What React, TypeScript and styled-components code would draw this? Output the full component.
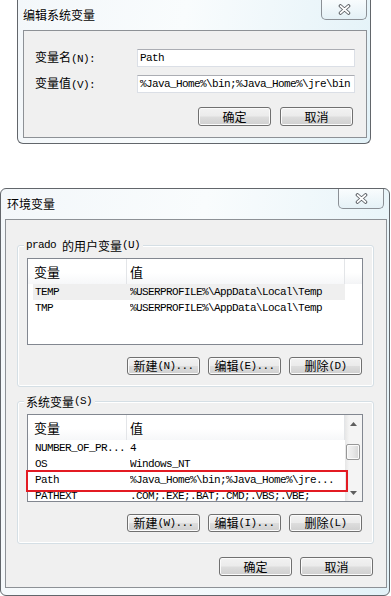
import React from "react";
import styled, { createGlobalStyle } from "styled-components";

const GlobalStyle = createGlobalStyle`
  html, body {
    margin: 0;
    padding: 0;
    background: #fff;
  }
  body {
    font-family: "Noto Sans CJK SC", "Noto Sans", sans-serif;
    font-size: 12px;
    color: #000;
  }
`;

const Page = styled.div`
  width: 391px;
  height: 596px;
  overflow: hidden;
  display: flex;
  flex-direction: column;
`;

const Window = styled.div`
  box-sizing: border-box;
  flex-shrink: 0;
  display: flex;
  flex-direction: column;
  border: 1px solid #62666b;
  background: linear-gradient(100deg, #f3f7fa 0%, #f9fcfd 45%, #e3f2f8 100%);
`;

const EditWindow = styled(Window)`
  margin-left: 17px;
  width: 354px;
  height: 144px;
  border-top: none;
  border-radius: 0 0 6px 6px;
  padding: 0 3px 5px 5px;
`;

const EnvWindow = styled(Window)`
  margin-top: 44px;
  width: 390px;
  height: 408px;
  border-radius: 6px;
  padding: 0 2px 7px 4px;
`;

const TitleBar = styled.div`
  height: 30px;
  flex-shrink: 0;
  display: flex;
  justify-content: space-between;
  align-items: flex-start;
`;

const Title = styled.div<{ $indent?: number }>`
  margin-left: ${(p) => p.$indent ?? 0}px;
  padding-top: 6px;
  line-height: 18px;
  font-size: 12px;
  text-shadow: 0 0 4px #fff, 0 0 2px #fff;
`;

const CloseButton = styled.div<{ $right?: number }>`
  box-sizing: border-box;
  width: 46px;
  height: 20px;
  margin-right: ${(p) => p.$right ?? 0}px;
  border: 1px solid #8b9096;
  border-top: none;
  border-radius: 0 0 5px 5px;
  background: linear-gradient(rgba(255, 255, 255, 0.7), rgba(225, 238, 244, 0.6));
  display: flex;
  align-items: center;
  justify-content: center;
`;

const Panel = styled.div`
  flex: 1;
  box-sizing: border-box;
  background: #f0f0f0;
  border: 1px solid #8d9196;
  display: flex;
  flex-direction: column;
`;

const Ascii = styled.span`
  font-family: "Liberation Mono", monospace;
  font-size: 11px;
  letter-spacing: -0.6px;
`;

const Form = styled.div`
  display: grid;
  grid-template-columns: 102px 218px;
  grid-auto-rows: 18px;
  row-gap: 8px;
  padding: 18px 0 0 11px;
`;

const Label = styled.div`
  align-self: center;
  line-height: 16px;
`;

const TextField = styled.div`
  box-sizing: border-box;
  height: 18px;
  background: #fff;
  border: 1px solid #dbdfe6;
  border-top-color: #abadb3;
  padding-left: 2px;
  display: flex;
  align-items: center;
  white-space: nowrap;
  overflow: hidden;
  font-family: "Liberation Mono", monospace;
  font-size: 11px;
  letter-spacing: -0.6px;
`;

const ButtonRow = styled.div<{ $top: number; $right: number; $gap: number }>`
  display: flex;
  justify-content: flex-end;
  gap: ${(p) => p.$gap}px;
  margin-top: ${(p) => p.$top}px;
  padding-right: ${(p) => p.$right}px;
`;

const Button = styled.div<{ $h: number }>`
  box-sizing: border-box;
  width: 73px;
  height: ${(p) => p.$h}px;
  border: 1px solid #707070;
  border-radius: 3px;
  background: linear-gradient(#f2f2f2 0%, #ebebeb 48%, #dddddd 52%, #cfcfcf 100%);
  box-shadow: inset 0 0 0 1px #fbfbfb;
  display: flex;
  align-items: center;
  justify-content: center;
  line-height: 14px;
  white-space: nowrap;
`;

const GroupBox = styled.div<{ $top: number }>`
  margin: ${(p) => p.$top}px 12px 0 11px;
  border: 1px solid #d5dfe5;
  border-radius: 3px;
  box-shadow: inset 0 0 0 1px #fff;
  padding-bottom: 11px;
  display: flex;
  flex-direction: column;
`;

const Legend = styled.div`
  align-self: flex-start;
  height: 14px;
  margin: -8px 0 0 6px;
  padding: 0 3px 0 2px;
  display: flex;
  align-items: center;
  background: #f0f0f0;
  white-space: nowrap;
`;

const ListWrap = styled.div`
  position: relative;
  margin: 6px 10px 0 9px;
`;

const ListBox = styled.div<{ $h: number }>`
  box-sizing: border-box;
  height: ${(p) => p.$h}px;
  border: 1px solid #828790;
  background: #fff;
  overflow: hidden;
  display: flex;
`;

const ListMain = styled.div`
  width: 317px;
  flex-shrink: 0;
  display: flex;
  flex-direction: column;
`;

const Header = styled.div`
  display: grid;
  grid-template-columns: 99px 218px;
  height: 25px;
  flex-shrink: 0;
`;

const HeaderCell = styled.div<{ $pad: number }>`
  box-sizing: border-box;
  padding-left: ${(p) => p.$pad}px;
  border-right: 1px solid #e3e5e8;
  background: linear-gradient(#fff 0%, #fff 55%, #f6f7f9 100%);
  display: flex;
  align-items: center;
  font-size: 13px;
`;

const HeaderFiller = styled.div`
  height: 25px;
  background: linear-gradient(#fff 0%, #fff 55%, #f3f4f6 100%);
`;

const Side = styled.div`
  flex: 1;
`;

const Rows = styled.div`
  padding-left: 5px;
`;

const Row = styled.div<{ $hot?: boolean }>`
  display: grid;
  grid-template-columns: 97px 1fr;
  height: 16px;
  align-items: center;
  background: ${(p) => (p.$hot ? "#efefef" : "transparent")};
  font-family: "Liberation Mono", monospace;
  font-size: 11px;
  letter-spacing: -0.6px;
  white-space: nowrap;
`;

const Cell = styled.div<{ $pad: number }>`
  padding-left: ${(p) => p.$pad}px;
  overflow: hidden;
`;

const Scrollbar = styled.div`
  flex: 1;
  display: flex;
  flex-direction: column;
  background: linear-gradient(90deg, #e6e6e6 0%, #f4f4f4 25%, #f4f4f4 100%);
`;

const ScrollArrow = styled.div`
  height: 17px;
  flex-shrink: 0;
  display: flex;
  align-items: center;
  justify-content: center;
`;

const ScrollTrack = styled.div`
  flex: 1;
  padding-top: 12px;
`;

const Thumb = styled.div`
  box-sizing: border-box;
  margin-left: 1px;
  width: 14px;
  height: 16px;
  border: 1px solid #979797;
  border-radius: 2px;
  background: linear-gradient(90deg, #f3f3f3 0%, #e8e8e8 50%, #d6d6d6 100%);
  box-shadow: inset 0 0 0 1px #fafafa;
`;

const Marker = styled.div`
  position: absolute;
  left: -1px;
  top: 56px;
  width: 322px;
  height: 22px;
  box-sizing: border-box;
  border: 2px solid #e31b23;
  pointer-events: none;
`;

const CloseIcon = () => (
  <svg width="13" height="11" viewBox="0 0 13 11">
    <path d="M2.5 2 L10.5 9 M10.5 2 L2.5 9" stroke="#5b5f64" strokeWidth="3.6" strokeLinecap="round" />
    <path d="M2.5 2 L10.5 9 M10.5 2 L2.5 9" stroke="#fff" strokeWidth="1.7" strokeLinecap="round" />
  </svg>
);

const Arrow = ({ up }: { up?: boolean }) => (
  <svg width="7" height="4" viewBox="0 0 7 4">
    <path d={up ? "M0 4 L3.5 0 L7 4Z" : "M0 0 L3.5 4 L7 0Z"} fill="#5e5e5e" />
  </svg>
);

type Variable = { name: string; value: string; hot?: boolean };

const userVars: Variable[] = [
  { name: "TEMP", value: "%USERPROFILE%\\AppData\\Local\\Temp", hot: true },
  { name: "TMP", value: "%USERPROFILE%\\AppData\\Local\\Temp" },
];

const systemVars: Variable[] = [
  { name: "NUMBER_OF_PR...", value: "4" },
  { name: "OS", value: "Windows_NT" },
  { name: "Path", value: "%Java_Home%\\bin;%Java_Home%\\jre..." },
  { name: "PATHEXT", value: ".COM;.EXE;.BAT;.CMD;.VBS;.VBE;" },
];

const VarList = ({ items }: { items: Variable[] }) => (
  <ListMain>
    <Header>
      <HeaderCell $pad={6}>变量</HeaderCell>
      <HeaderCell $pad={3}>值</HeaderCell>
    </Header>
    <Rows>
      {items.map((v) => (
        <Row key={v.name} $hot={v.hot}>
          <Cell $pad={2}>{v.name}</Cell>
          <Cell $pad={0}>{v.value}</Cell>
        </Row>
      ))}
    </Rows>
  </ListMain>
);

export default function App() {
  return (
    <Page>
      <GlobalStyle />

      <EditWindow>
        <TitleBar>
          <Title>编辑系统变量</Title>
          <CloseButton>
            <CloseIcon />
          </CloseButton>
        </TitleBar>
        <Panel>
          <Form>
            <Label>
              变量名<Ascii>(N):</Ascii>
            </Label>
            <TextField>Path</TextField>
            <Label>
              变量值<Ascii>(V):</Ascii>
            </Label>
            <TextField>%Java_Home%\bin;%Java_Home%\jre\bin</TextField>
          </Form>
          <ButtonRow $top={14} $right={13} $gap={9}>
            <Button $h={19}>确定</Button>
            <Button $h={19}>取消</Button>
          </ButtonRow>
        </Panel>
      </EditWindow>

      <EnvWindow>
        <TitleBar>
          <Title $indent={2}>环境变量</Title>
          <CloseButton $right={3}>
            <CloseIcon />
          </CloseButton>
        </TitleBar>
        <Panel>
          <GroupBox $top={25}>
            <Legend>
              <Ascii>prado&nbsp;</Ascii>的用户变量<Ascii>(U)</Ascii>
            </Legend>
            <ListWrap>
              <ListBox $h={87}>
                <VarList items={userVars} />
                <Side>
                  <HeaderFiller />
                </Side>
              </ListBox>
            </ListWrap>
            <ButtonRow $top={12} $right={11} $gap={8}>
              <Button $h={18}>
                新建<Ascii>(N)...</Ascii>
              </Button>
              <Button $h={18}>
                编辑<Ascii>(E)...</Ascii>
              </Button>
              <Button $h={18}>
                删除<Ascii>(D)</Ascii>
              </Button>
            </ButtonRow>
          </GroupBox>

          <GroupBox $top={14}>
            <Legend>
              系统变量<Ascii>(S)</Ascii>
            </Legend>
            <ListWrap>
              <ListBox $h={88}>
                <VarList items={systemVars} />
                <Scrollbar>
                  <ScrollArrow>
                    <Arrow up />
                  </ScrollArrow>
                  <ScrollTrack>
                    <Thumb />
                  </ScrollTrack>
                  <ScrollArrow>
                    <Arrow />
                  </ScrollArrow>
                </Scrollbar>
              </ListBox>
              <Marker />
            </ListWrap>
            <ButtonRow $top={12} $right={11} $gap={8}>
              <Button $h={18}>
                新建<Ascii>(W)...</Ascii>
              </Button>
              <Button $h={18}>
                编辑<Ascii>(I)...</Ascii>
              </Button>
              <Button $h={18}>
                删除<Ascii>(L)</Ascii>
              </Button>
            </ButtonRow>
          </GroupBox>

          <ButtonRow $top={13} $right={13} $gap={8}>
            <Button $h={19}>确定</Button>
            <Button $h={19}>取消</Button>
          </ButtonRow>
        </Panel>
      </EnvWindow>
    </Page>
  );
}
